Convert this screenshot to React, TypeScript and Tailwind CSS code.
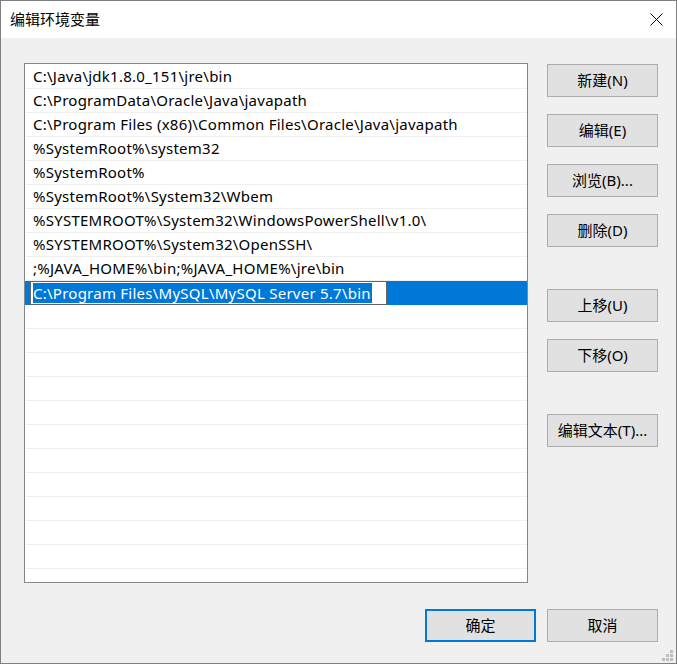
import React from "react";

const paths = [
  "C:\\Java\\jdk1.8.0_151\\jre\\bin",
  "C:\\ProgramData\\Oracle\\Java\\javapath",
  "C:\\Program Files (x86)\\Common Files\\Oracle\\Java\\javapath",
  "%SystemRoot%\\system32",
  "%SystemRoot%",
  "%SystemRoot%\\System32\\Wbem",
  "%SYSTEMROOT%\\System32\\WindowsPowerShell\\v1.0\\",
  "%SYSTEMROOT%\\System32\\OpenSSH\\",
  ";%JAVA_HOME%\\bin;%JAVA_HOME%\\jre\\bin",
];

const editing = "C:\\Program Files\\MySQL\\MySQL Server 5.7\\bin";

const font = { fontFamily: '"Noto Sans", "Noto Sans CJK SC", sans-serif' };

const Btn = ({ label, primary }: { label: string; primary?: boolean }) => (
  <button
    className={
      primary
        ? "flex h-[33px] w-[111px] items-center justify-center border-2 border-[#0078d7] bg-[#e1e1e1] text-[15px] text-black"
        : "flex h-[33px] w-[111px] items-center justify-center border border-[#adadad] bg-[#e1e1e1] text-[15px] text-black"
    }
  >
    {label}
  </button>
);

const App = () => {
  // 21 full rows, the 10th is the one being edited
  const rows = Array.from({ length: 21 }, (_, i) => i);

  return (
    <div
      className="relative flex h-[664px] w-[677px] flex-col overflow-hidden border border-[#7f7f7f] bg-[#f0f0f0]"
      style={font}
    >
      <div className="flex h-[37px] shrink-0 items-center justify-between bg-white pl-[9px] pr-[13px]">
        <span className="text-[15px] text-black">编辑环境变量</span>
        <svg width="13" height="13" viewBox="0 0 13 13">
          <path d="M0.5 0.5 L12.5 12.5 M12.5 0.5 L0.5 12.5" stroke="#000" strokeWidth="1" />
        </svg>
      </div>

      <div className="flex pl-[23px] pt-[25px]">
        <div className="h-[520px] w-[504px] shrink-0 overflow-hidden border border-[#828790] bg-white pt-[1px]">
          {rows.map((i) =>
            i === 9 ? (
              <div key={i} className="flex h-[24px] items-center bg-[#0078d7] pl-[5px]">
                <div className="flex h-[24px] w-[357px] items-center border border-[#646464] bg-white pl-[2px]">
                  <span className="bg-[#0078d7] pr-[1px] text-[15px] leading-[20px] tracking-[0.25px] text-white">
                    {editing}
                  </span>
                </div>
              </div>
            ) : (
              <div
                key={i}
                className="ml-[1px] flex h-[24px] items-center border-b border-[#efefef] pl-[7px] text-[15px] tracking-[0.25px] text-black"
              >
                {paths[i] ?? ""}
              </div>
            )
          )}
        </div>

        <div className="ml-[19px] mt-[1px] flex flex-col">
          <Btn label="新建(N)" />
          <div className="mt-[17px]">
            <Btn label="编辑(E)" />
          </div>
          <div className="mt-[17px]">
            <Btn label="浏览(B)..." />
          </div>
          <div className="mt-[17px]">
            <Btn label="删除(D)" />
          </div>
          <div className="mt-[42px]">
            <Btn label="上移(U)" />
          </div>
          <div className="mt-[17px]">
            <Btn label="下移(O)" />
          </div>
          <div className="mt-[42px]">
            <Btn label="编辑文本(T)..." />
          </div>
        </div>
      </div>

      <div className="mt-[26px] flex justify-end gap-[11px] pr-[18px]">
        <Btn label="确定" primary />
        <Btn label="取消" />
      </div>

      <svg className="absolute bottom-[2px] right-[3px]" width="11" height="11" viewBox="0 0 11 11">
        <rect x="8" y="0" width="3" height="3" fill="#bfbfbf" />
        <rect x="4" y="4" width="3" height="3" fill="#bfbfbf" />
        <rect x="8" y="4" width="3" height="3" fill="#bfbfbf" />
        <rect x="0" y="8" width="3" height="3" fill="#bfbfbf" />
        <rect x="4" y="8" width="3" height="3" fill="#bfbfbf" />
        <rect x="8" y="8" width="3" height="3" fill="#bfbfbf" />
      </svg>
    </div>
  );
};

export default App;
